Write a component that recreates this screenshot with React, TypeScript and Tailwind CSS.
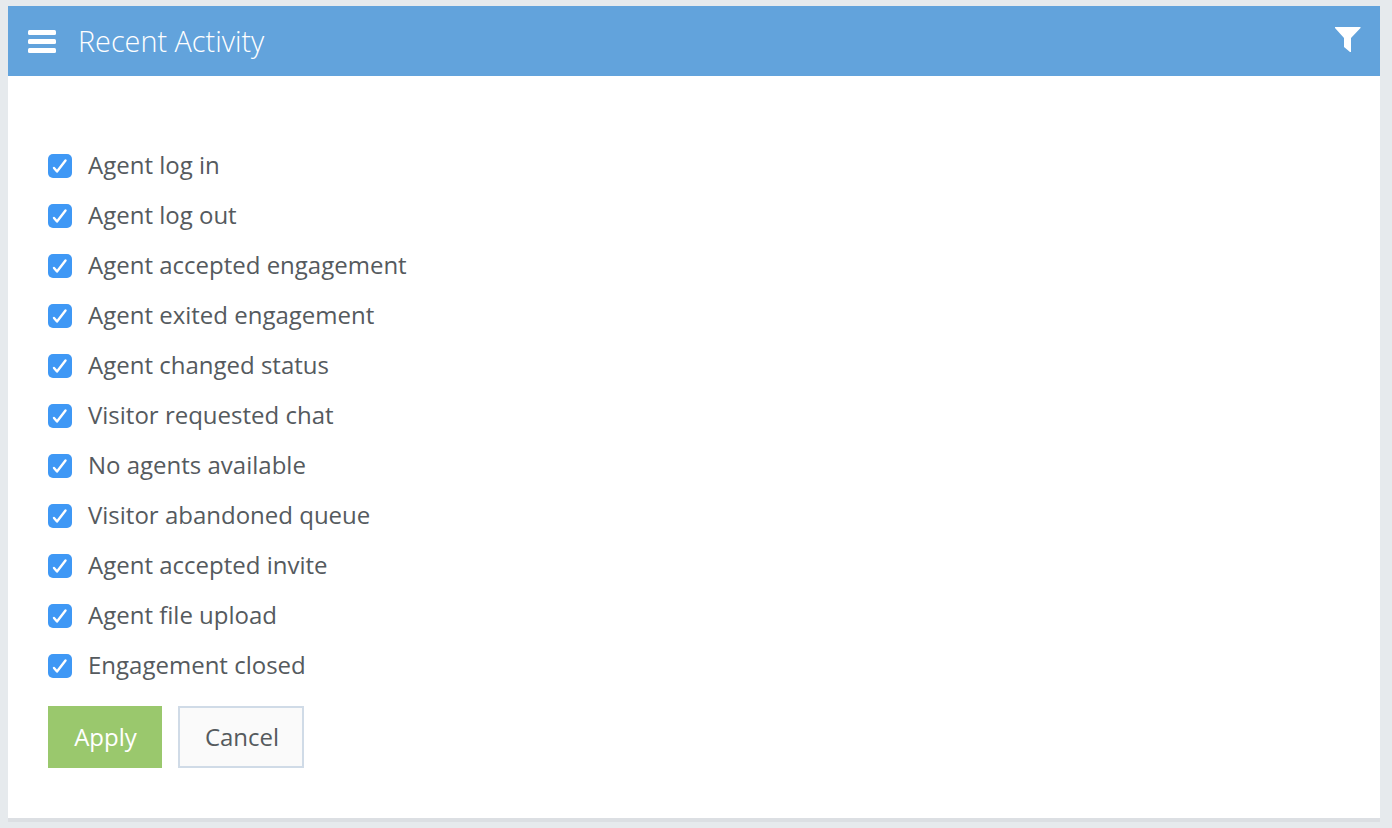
const items = [
  'Agent log in',
  'Agent log out',
  'Agent accepted engagement',
  'Agent exited engagement',
  'Agent changed status',
  'Visitor requested chat',
  'No agents available',
  'Visitor abandoned queue',
  'Agent accepted invite',
  'Agent file upload',
  'Engagement closed',
]

function CheckBox() {
  return (
    <span className="h-6 w-6 rounded-[5px] bg-[#3f98f5]">
      <svg width="24" height="24" viewBox="0 0 24 24" fill="none">
        <path d="M6 14 L9 17.5 L17.5 6.5" stroke="#fff" strokeWidth="2.4" strokeLinecap="round" strokeLinejoin="round" />
      </svg>
    </span>
  )
}

export default function App() {
  return (
    <div className="h-[828px] bg-[#e6eaed] pt-[6px] pr-3 pl-2 font-['Open_Sans',sans-serif]">
      <div className="h-[812px] bg-white shadow-[0_4px_0_#dcdfe3]">
        {/* Header */}
        <div className="flex h-[70px] items-center justify-between bg-[#62a3dc] pr-[19px] pl-5 text-white">
          <div className="flex items-center gap-[22px]">
            <svg width="28" height="23" viewBox="0 0 28 23" fill="#fff">
              <rect x="0" y="0" width="28" height="5" rx="1.5" />
              <rect x="0" y="9" width="28" height="5" rx="1.5" />
              <rect x="0" y="18" width="28" height="5" rx="1.5" />
            </svg>
            <h1 className="text-[28.8px] font-light">Recent Activity</h1>
          </div>
          <svg className="mb-[4px]" width="26" height="26" viewBox="0 0 26 26" fill="#fff">
            <path d="M0 1 H25.5 V2 L16 12 V26 H15 L9 21 V12 L0 2 Z" />
          </svg>
        </div>

        {/* Filter list */}
        <div className="px-10 pt-[65px]">
          {items.map((item) => (
            <label key={item} className="flex h-[50px] items-center gap-4 text-[24px] text-[#555a5e]">
              <CheckBox />
              <span className="mb-[2px]">{item}</span>
            </label>
          ))}
          <div className="mt-[15px] flex gap-4">
            <button className="h-[62px] w-[114px] bg-[#9ac86d] pl-[1px] text-[24px] text-white">Apply</button>
            <button className="h-[62px] w-[126px] border-2 border-[#d0dbe7] bg-[#fafafa] pl-[2px] text-[24px] text-[#555a5e]">Cancel</button>
          </div>
        </div>
      </div>
    </div>
  )
}
